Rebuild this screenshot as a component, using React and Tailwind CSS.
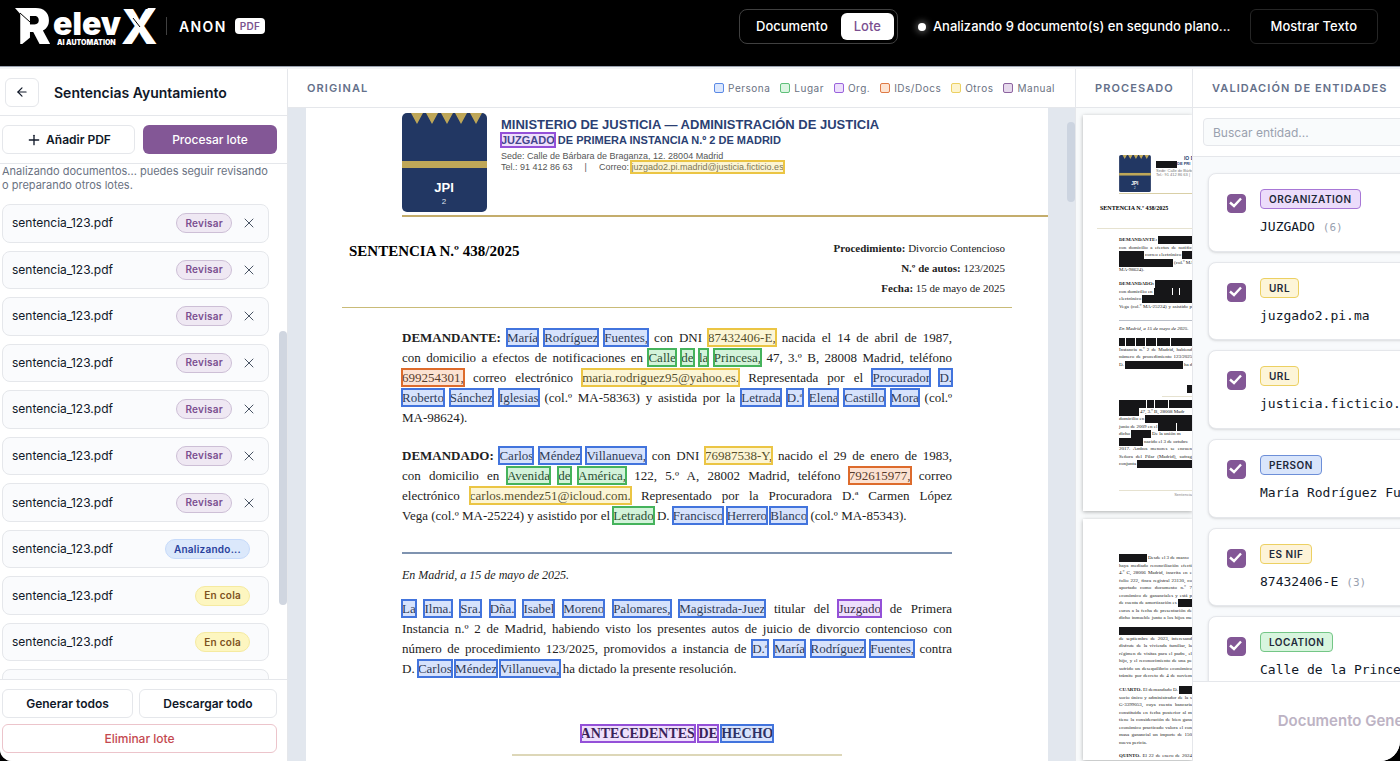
import { useState } from "react";
import { ArrowLeft, Plus, X } from "lucide-react";
import clsx from "clsx";

const files = [
  "revisar", "revisar", "revisar", "revisar", "revisar", "revisar", "revisar",
  "analizando", "cola", "cola", "cola",
].map((status, id) => ({ id, name: "sentencia_123.pdf", status }));

const statusStyles = {
  revisar: { label: "Revisar", className: "bg-[#efe8f3] border-[#cdbfd6] text-[#7b4f90]" },
  analizando: { label: "Analizando...", className: "bg-[#dbe8fb] border-[#c6dafa] text-[#28409c]" },
  cola: { label: "En cola", className: "bg-[#fdf6c0] border-[#f5eaa0] text-[#7d5220]" },
};

const legend = [
  { label: "Persona", className: "bg-[#dbe7fd] border-[#5b8ae6]" },
  { label: "Lugar", className: "bg-[#dcf5e2] border-[#5fc07a]" },
  { label: "Org.", className: "bg-[#eddffc] border-[#9a63dc]" },
  { label: "IDs/Docs", className: "bg-[#fde4d2] border-[#df7a45]" },
  { label: "Otros", className: "bg-[#fdf4cf] border-[#ecd062]" },
  { label: "Manual", className: "bg-[#e6d9ec] border-[#8d64a0]" },
];

const entities = [
  { type: "ORGANIZATION", text: "JUZGADO", count: 6, className: "bg-[#ecdcfb] border-[#a877d6]" },
  { type: "URL", text: "juzgado2.pi.ma", className: "bg-[#fdf5d8] border-[#ecd062]" },
  { type: "URL", text: "justicia.ficticio.es", className: "bg-[#fdf5d8] border-[#ecd062]" },
  { type: "PERSON", text: "María Rodríguez Fuentes", className: "bg-[#d9e5fb] border-[#6d8fd8]" },
  { type: "ES NIF", text: "87432406-E", count: 3, className: "bg-[#fdf3d8] border-[#ecd062]" },
  { type: "LOCATION", text: "Calle de la Princesa", className: "bg-[#d8f5de] border-[#74c686]" },
];

const markStyles = {
  p: "after:border-[#4274dd] after:bg-[#5b8cf5]/25",
  l: "after:border-[#45b35c] after:bg-[#4fd06c]/25",
  o: "after:border-[#9450d8] after:bg-[#a95ff0]/20",
  i: "after:border-[#dd6b2c] after:bg-[#f58a4d]/25",
  u: "after:border-[#ebc544] after:bg-[#f5d653]/25",
};

// Inside a line, [p:María] is an entity of kind p and *x* is bold
function rich(line) {
  return line.split(/(\[\w:[^\]]+\]|\*[^*]+\*)/).map((part, i) => {
    if (part.startsWith("[")) {
      return (
        <mark
          key={i}
          className={clsx(
            "relative bg-transparent text-inherit after:absolute after:-inset-x-px after:-inset-y-0.5 after:border-2",
            markStyles[part[1]]
          )}
        >
          {part.slice(3, -1)}
        </mark>
      );
    }
    if (part.startsWith("*")) return <strong key={i}>{part.slice(1, -1)}</strong>;
    return part;
  });
}

const demandante = [
  "*DEMANDANTE:* [p:María] [p:Rodríguez] [p:Fuentes,] con DNI [u:87432406-E,] nacida el 14 de abril de 1987,",
  "con domicilio a efectos de notificaciones en [l:Calle] [l:de] [l:la] [l:Princesa,] 47, 3.º B, 28008 Madrid, teléfono",
  "[i:699254301,] correo electrónico [u:maria.rodriguez95@yahoo.es.] Representada por el [p:Procurador] [p:D.]",
  "[p:Roberto] [p:Sánchez] [p:Iglesias] (col.º MA-58363) y asistida por la [p:Letrada] [p:D.ª] [p:Elena] [p:Castillo] [p:Mora] (col.º",
  "MA-98624).",
];

const demandado = [
  "*DEMANDADO:* [p:Carlos] [p:Méndez] [p:Villanueva,] con DNI [u:76987538-Y,] nacido el 29 de enero de 1983,",
  "con domicilio en [l:Avenida] [l:de] [l:América,] 122, 5.º A, 28002 Madrid, teléfono [i:792615977,] correo",
  "electrónico [u:carlos.mendez51@icloud.com.] Representado por la Procuradora D.ª Carmen López",
  "Vega (col.º MA-25224) y asistido por el [l:Letrado] D. [p:Francisco] [p:Herrero] [p:Blanco] (col.º MA-85343).",
];

const resolucion = [
  "[p:La] [p:Ilma.] [p:Sra.] [p:Dña.] [p:Isabel] [p:Moreno] [p:Palomares,] [p:Magistrada-Juez] titular del [o:Juzgado] de Primera",
  "Instancia n.º 2 de Madrid, habiendo visto los presentes autos de juicio de divorcio contencioso con",
  "número de procedimiento 123/2025, promovidos a instancia de [p:D.ª] [p:María] [p:Rodríguez] [p:Fuentes,] contra",
  "D. [p:Carlos] [p:Méndez] [p:Villanueva,] ha dictado la presente resolución.",
];

function Paragraph({ lines, className }) {
  return (
    <p className={className}>
      {lines.map((line, i) => (
        <span
          key={i}
          className={clsx(
            "block whitespace-nowrap",
            i < lines.length - 1 && "text-justify [text-align-last:justify]"
          )}
        >
          {rich(line)}
        </span>
      ))}
    </p>
  );
}

// Redacted preview: numbers are black bars of that width, 0 fills the line
const redDemandante = [
  ["*DEMANDANTE:*", 0],
  ["con domicilio a efectos de notifica"],
  [25, "correo electrónico", 0],
  [54, "(col.º MA"],
  ["MA-98624)."],
];
const redDemandado = [
  ["*DEMANDADO:*", 0],
  ["con domicilio en", 18, 6, 0],
  ["electrónico", 0],
  ["Vega (col.º MA-25224) y asistido p"],
];
const redResolucion = [
  [6, 9, 9, 10, 13, 0],
  ["Instancia n.º 2 de Madrid, habiend"],
  ["número de procedimiento 123/2025"],
  ["D.", 58, "ha d"],
];
const redHechos = [
  [27, 7, 13, 0],
  [20, "47, 3.º B, 28008 Madr"],
  ["domicilio en", 0],
  ["junio de 2009 en el", 18, 0],
  ["dicho", 20, "De la unión m"],
  [24, "nacido el 3 de octubre"],
  ["2017. Ambos menores se encuen"],
  ["Señora del Pilar (Madrid), sufrag"],
  ["conjunta", 0],
];
const redPage2 = [
  [28, "Desde el 3 de marzo"],
  ["haya mediado reconciliación efecti"],
  ["4.º C, 28006 Madrid, inscrita en e"],
  ["folio 222, finca registral 23130, co"],
  ["aportado como documento n.º 7"],
  ["económico de gananciales y está p"],
  ["de cuenta de amortización es", 0],
  ["euros a la fecha de presentación de"],
  ["dicho inmueble junto a los hijos me"],
];
const redTercero = [
  [0],
  ["de septiembre de 2023, interesand"],
  ["disfrute de la vivienda familiar, la"],
  ["régimen de visitas para el padre, el"],
  ["hijo, y el reconocimiento de una pe"],
  ["sufrido un desequilibrio económico"],
  ["trámite por decreto de 4 de noviem"],
];
const redCuarto = [
  ["*CUARTO.* El demandado D.", 0],
  ["socio único y administrador de la s"],
  ["G-3399053, cuya cuenta bancaria"],
  ["constituida en fecha posterior al m"],
  ["tiene la consideración de bien gana"],
  ["económico practicado valora el con"],
  ["masa ganancial un importe de 150"],
  ["nueva pericia."],
];

function Redacted({ lines, className }) {
  return (
    <div className={clsx("grid auto-rows-fr", className)}>
      {lines.map((line, i) => {
        const onlyText = line.length === 1 && typeof line[0] === "string";
        const short = onlyText && line[0].length < 16;
        return onlyText ? (
          <span
            key={i}
            className={clsx("whitespace-nowrap", !short && "text-justify [text-align-last:justify]")}
          >
            {rich(line[0])}
          </span>
        ) : (
          <span key={i} className="flex gap-px whitespace-nowrap">
            {line.map((part, j) =>
              typeof part === "string" ? (
                <span key={j} className="shrink-0">{rich(part)}</span>
              ) : (
                <span
                  key={j}
                  className={clsx("h-2 bg-[#161618]", part ? "shrink-0" : "flex-1")}
                  style={part ? { width: part } : undefined}
                />
              )
            )}
          </span>
        );
      })}
    </div>
  );
}

function Shield({ className }) {
  return (
    <svg viewBox="0 0 85 99" className={className} aria-hidden="true">
      <rect width="85" height="99" rx="5" fill="#223763" />
      <path
        d="M9 0H21L15 11ZM24 0H36L30 11ZM39 0H51L45 11ZM53 0H65L59 11ZM68 0H80L74 11Z"
        fill="#bfa758"
      />
      <rect y="48" width="85" height="7" fill="#bfa758" />
      <text x="42" y="79" textAnchor="middle" fontSize="13" fontWeight="700" fill="#fff" fontFamily="Liberation Sans, sans-serif">
        JPI
      </text>
      <text x="42" y="91" textAnchor="middle" fontSize="8" fill="#dfe4ee" fontFamily="Liberation Sans, sans-serif">
        2
      </text>
    </svg>
  );
}

function Logo() {
  return (
    <svg width="144" height="44" viewBox="0 0 144 44" className="overflow-visible" role="img" aria-label="RelevX AI Automation" fill="#fff" fontFamily="Inter, sans-serif">
      <text x="2" y="40" fontSize="49" fontWeight="900">R</text>
      <path d="M-1 4H20V12H6Z" />
      <path d="M4 9L14 18L20 18" stroke="#000" strokeWidth="1" fill="none" />
      <path d="M5 41L16 32V41Z" fill="#000" />
      <text x="37" y="31" fontSize="32" fontWeight="900">elev</text>
      <text x="105" y="40" fontSize="48" fontWeight="800">X</text>
      <path d="M126 12L132 4H140L132 14Z" />
      <path d="M117 14L124 23" stroke="#000" strokeWidth="1" />
      <text x="41" y="41" fontSize="7" fontWeight="900">AI AUTOMATION</text>
    </svg>
  );
}

function TopBar() {
  return (
    <header className="flex h-[67px] shrink-0 items-start border-b border-gray-400 bg-black pr-[22px] pl-4 text-[13px] font-medium text-white">
      <div className="flex h-[52px] items-center">
        <Logo />
        <span className="ml-1.5 h-[18px] w-px bg-neutral-700" />
        <span className="ml-3 text-[14px] font-semibold tracking-widest">ANON</span>
        <span className="ml-2 rounded bg-white px-[5px] text-[10px] leading-4 font-semibold tracking-wide text-[#7b5590]">PDF</span>
      </div>
      <div className="ml-auto flex items-center pt-[9px]">
        <div className="flex h-[35px] items-center rounded-lg border border-neutral-700 px-[3px]">
          <button className="h-[27px] px-[13px]">Documento</button>
          <button className="h-[27px] rounded-md bg-white px-[13px] text-[#7b4f90]">Lote</button>
        </div>
        <span className="ml-5 size-2 rounded-full bg-white shadow-[0_0_6px_2px_rgba(255,255,255,0.3)]" />
        <span className="ml-[7px]">Analizando 9 documento(s) en segundo plano...</span>
        <button className="ml-[19px] h-[35px] rounded-md border border-neutral-800 px-5">Mostrar Texto</button>
      </div>
    </header>
  );
}

function Sidebar() {
  return (
    <aside className="flex w-[287px] shrink-0 flex-col bg-white text-[12px] text-gray-900">
      <div className="flex h-[47px] shrink-0 items-center gap-[15px] border-b border-gray-200 pl-[5px]">
        <button aria-label="Volver" className="flex h-[29px] w-[34px] items-center justify-center rounded-md border border-gray-200">
          <ArrowLeft size={14} />
        </button>
        <h1 className="text-[14px] font-semibold">Sentencias Ayuntamiento</h1>
      </div>
      <div className="grid h-12 shrink-0 grid-cols-[133px_1fr] items-center gap-2 border-b border-gray-200 pr-2.5 pl-0.5 font-semibold">
        <button className="flex h-[29px] items-center justify-center gap-1 rounded-md border border-gray-200">
          <Plus size={16} />
          Añadir PDF
        </button>
        <button className="h-[29px] rounded-md bg-[#835796] font-medium text-white">Procesar lote</button>
      </div>

      <div className="flex min-h-0 flex-1 overflow-hidden">
        <div className="min-w-0 flex-1 pl-0.5">
          <p className="pr-1 text-[11px] leading-3.5 text-gray-500">
            Analizando documentos... puedes seguir revisando o preparando otros lotes.
          </p>
          <ul className="mt-3 mr-2.5 grid h-[504px] auto-rows-fr gap-2">
            {files.map((file) => (
              <li key={file.id} className="flex items-center rounded-lg border border-gray-200 bg-[#fafbfd] pr-[11px] pl-[9px]">
                <span>{file.name}</span>
                <span
                  className={clsx(
                    "ml-auto flex h-5 items-center rounded-full border px-2 text-[10px] font-semibold tracking-wide",
                    statusStyles[file.status].className
                  )}
                >
                  {statusStyles[file.status].label}
                </span>
                {file.status === "revisar" ? (
                  <button aria-label="Quitar" className="ml-[9px] text-gray-600">
                    <X size={16} strokeWidth={1.5} />
                  </button>
                ) : (
                  <span className="w-[7px]" />
                )}
              </li>
            ))}
          </ul>
        </div>
        <div className="w-2 shrink-0 pt-[167px]">
          <div className="h-[274px] rounded-full bg-[#d0d6e0]" />
        </div>
      </div>

      <div className="grid shrink-0 grid-cols-[131px_1fr] gap-1.5 border-t border-gray-200 pt-[9px] pr-2.5 pb-2 pl-0.5 font-semibold">
        <button className="h-[29px] rounded-md border border-gray-200">Generar todos</button>
        <button className="h-[29px] rounded-md border border-gray-200">Descargar todo</button>
        <button className="col-span-2 h-[29px] rounded-md border border-[#ecc4cb] font-medium text-[#c4484f]">Eliminar lote</button>
      </div>
    </aside>
  );
}

function PanelTitle({ children }) {
  return <h2 className="text-[11px] font-semibold tracking-widest whitespace-nowrap text-[#64708a]">{children}</h2>;
}

function Original() {
  return (
    <section className="flex min-w-0 flex-1 flex-col border-l border-gray-200">
      <div className="flex h-[39px] shrink-0 items-center justify-between border-b border-gray-200 bg-white pr-5 pl-[19px]">
        <PanelTitle>ORIGINAL</PanelTitle>
        <ul className="flex gap-2.5 text-[10px] tracking-wider text-gray-500">
          {legend.map((item) => (
            <li key={item.label} className="flex items-center gap-1">
              <span className={clsx("size-2.5 rounded-xs border", item.className)} />
              {item.label}
            </li>
          ))}
        </ul>
      </div>
      <div className="flex min-h-0 flex-1 overflow-hidden bg-[#e2e7ee] pl-[18px]">
        <article className="min-w-0 flex-1 bg-white pt-[5px] font-['Liberation_Serif',serif] text-[13px] leading-5 text-[#222]">
          <header className="ml-24 flex border-b-2 border-[#c4ad6c] pb-[3px] font-['Liberation_Sans',sans-serif]">
            <Shield className="h-[99px] w-[85px] shrink-0" />
            <div className="pt-1 pl-3.5 whitespace-nowrap">
              <p className="text-[13px] leading-4 font-bold text-[#2b3f73]">MINISTERIO DE JUSTICIA — ADMINISTRACIÓN DE JUSTICIA</p>
              <p className="text-[11px] leading-3.5 font-bold text-[#2b3f73]">{rich("[o:JUZGADO] DE PRIMERA INSTANCIA N.º 2 DE MADRID")}</p>
              <p className="mt-1 text-[9px] leading-[11px] text-[#555]">Sede: Calle de Bárbara de Braganza, 12. 28004 Madrid</p>
              <p className="flex gap-3 text-[9px] leading-[11px] text-[#555]">
                <span>Tel.: 91 412 86 63</span>
                <span>|</span>
                <span>Correo: {rich("[u:juzgado2.pi.madrid@justicia.ficticio.es]")}</span>
              </p>
            </div>
          </header>
          <div className="mx-9 flex justify-between border-b border-[#c9bb78] pt-[21px] pr-[7px] pb-[9px] pl-[7px]">
            <h3 className="pt-[3px] text-[15px] font-bold text-black">SENTENCIA N.º 438/2025</h3>
            <div className="text-right text-[11px] leading-5">
              <p><strong>Procedimiento:</strong> Divorcio Contencioso</p>
              <p><strong>N.º de autos:</strong> 123/2025</p>
              <p><strong>Fecha:</strong> 15 de mayo de 2025</p>
            </div>
          </div>
          <div className="px-24 pt-5">
            <Paragraph lines={demandante} />
            <Paragraph lines={demandado} className="mt-[18px]" />
            <div className="mt-[26px] border-t-2 border-[#7f93b0]" />
            <p className="mt-[11px] text-[12px] leading-5 italic">En Madrid, a 15 de mayo de 2025.</p>
            <Paragraph lines={resolucion} className="mt-3.5" />
            <h3 className="mt-[45px] text-center text-[14px] leading-5 font-bold text-[#1c1235]">
              {rich("[o:ANTECEDENTES] [o:DE] [p:HECHO]")}
            </h3>
            <div className="mx-auto mt-2.5 w-3/5 border-t-2 border-[#ddd7b8]" />
          </div>
        </article>
        <div className="w-[27px] shrink-0 pt-3.5">
          <div className="ml-auto h-20 w-2 rounded-full bg-[#ccd4e0]" />
        </div>
      </div>
    </section>
  );
}

function Procesado() {
  return (
    <section className="flex w-[117px] shrink-0 flex-col border-l border-gray-200">
      <div className="flex h-[39px] shrink-0 items-center border-b border-gray-200 bg-white pl-[19px]">
        <PanelTitle>PROCESADO</PanelTitle>
      </div>
      <div className="min-h-0 flex-1 overflow-hidden bg-[#f8fafb] pt-[7px] pl-[7px] font-['Liberation_Serif',serif] text-[5px] leading-2 text-[#222]">
        <div className="h-[396px] overflow-hidden bg-white pt-10 shadow-[0_1px_4px_rgba(0,0,0,0.3)]">
          <div className="ml-9 flex border-b border-[#d9cfa6] pb-px font-['Liberation_Sans',sans-serif]">
            <Shield className="h-[37px] w-8 shrink-0" />
            <div className="pl-[5px] whitespace-nowrap">
              <p className="flex justify-end text-[5px] leading-[6px] font-bold text-[#2b3f73]">IO DE</p>
              <p className="flex text-[4px] leading-[6px] font-bold text-[#2b3f73]">
                <span className="h-[7px] w-[21px] bg-[#161618]" />
                DE PRI
              </p>
              <p className="mt-px text-[4px] leading-1 text-[#777]">Sede: Calle de Bárbara</p>
              <p className="text-[4px] leading-1 text-[#777]">Tel.: 91 412 86 63 |</p>
            </div>
          </div>
          <p className="ml-[17px] pt-2.5 text-[6px] leading-2 font-bold whitespace-nowrap text-black">SENTENCIA N.º 438/2025</p>
          <div className="mt-4 ml-3.5 border-t border-[#e6e2d0]" />
          <div className="pt-[7px] pl-9">
            <Redacted lines={redDemandante} className="h-[38px]" />
            <Redacted lines={redDemandado} className="mt-1.5 h-[30px]" />
            <div className="mt-2.5 border-t border-[#b9bfc9]" />
            <p className="pt-1 italic">En Madrid, a 15 de mayo de 2025.</p>
            <Redacted lines={redResolucion} className="mt-[5px] h-[30px]" />
            <div className="mt-[17px] ml-auto h-2 w-[5px] bg-[#161618]" />
            <div className="mt-[3px] ml-[43px] border-t border-[#e6e2d0]" />
            <Redacted lines={redHechos} className="mt-[3px] h-[68px]" />
            <div className="mt-[22px] border-t border-[#e6e2d0]" />
            <p className="text-right font-['Liberation_Sans',sans-serif] text-[4px] leading-2 text-[#888]">Sentencia</p>
          </div>
        </div>
        <div className="mt-2 bg-white pt-[35px] pl-9 shadow-[0_1px_4px_rgba(0,0,0,0.3)]">
          <Redacted lines={redPage2} className="h-[68px]" />
          <Redacted lines={redTercero} className="mt-[5px] h-[53px]" />
          <Redacted lines={redCuarto} className="mt-1.5 h-[60px]" />
          <Redacted lines={[["*QUINTO.* El 22 de enero de 2024"]]} className="mt-1.5 h-2" />
        </div>
      </div>
    </section>
  );
}

function EntityCard({ entity, index }) {
  const [checked, setChecked] = useState(true);
  const id = `entity-${index}`;
  return (
    <li className="flex rounded-lg border border-gray-200 bg-white pt-[15px] pl-[18px] shadow">
      <span className="mt-[5px] grid size-[19px] shrink-0">
        <input
          id={id}
          type="checkbox"
          checked={checked}
          onChange={() => setChecked(!checked)}
          className="col-start-1 row-start-1 size-[19px] appearance-none rounded border border-[#835796] checked:bg-[#835796]"
        />
        {checked && (
          <svg viewBox="0 0 19 19" className="pointer-events-none col-start-1 row-start-1" fill="none" stroke="#fff" strokeWidth="2.4">
            <path d="M3 8.5L7 12L14 4.5" />
          </svg>
        )}
      </span>
      <label htmlFor={id} className="flex flex-col items-start pl-3.5">
        <span className={clsx("h-5 rounded border px-2 text-[10px] leading-[18px] font-semibold tracking-wider text-gray-800", entity.className)}>
          {entity.type}
        </span>
        <span className="mt-2 font-['DejaVu_Sans_Mono',monospace] text-[13px] leading-5 whitespace-nowrap text-gray-900">
          {entity.text}
          {entity.count && <span className="ml-2 text-[11px] text-gray-400">({entity.count})</span>}
        </span>
      </label>
    </li>
  );
}

function Validacion() {
  return (
    <aside className="w-52 shrink-0 overflow-hidden border-l border-gray-200 bg-white">
      <div className="flex h-full w-[328px] flex-col">
        <div className="flex h-[39px] shrink-0 items-center border-b border-gray-200 pl-[19px]">
          <PanelTitle>VALIDACIÓN DE ENTIDADES</PanelTitle>
        </div>
        <div className="h-[49px] shrink-0 border-b border-gray-200 px-2.5 pt-2.5">
          <input
            type="text"
            aria-label="Buscar entidad"
            placeholder="Buscar entidad..."
            className="h-[28px] w-full rounded border border-gray-200 bg-[#f9fbfc] px-[9px] text-[12px] placeholder:text-gray-400"
          />
        </div>
        <div className="min-h-0 flex-1 overflow-hidden bg-[#f8fafc] px-[15px] pt-4">
          <ul className="grid h-[522px] auto-rows-fr gap-2.5">
            {entities.map((entity, i) => (
              <EntityCard key={i} entity={entity} index={i} />
            ))}
          </ul>
        </div>
        <div className="h-20 shrink-0 border-t border-gray-200">
          <button className="h-full w-full text-[15px] font-semibold text-[#bdb3c4]">Documento Generado</button>
        </div>
      </div>
    </aside>
  );
}

export default function App() {
  return (
    <div className="flex h-screen flex-col overflow-hidden bg-black font-['Inter',sans-serif]">
      <TopBar />
      <main className="flex min-h-0 flex-1 overflow-hidden rounded-br-[20px] rounded-bl-xl bg-gray-100 pt-0.5">
        <Sidebar />
        <Original />
        <Procesado />
        <Validacion />
      </main>
    </div>
  );
}
